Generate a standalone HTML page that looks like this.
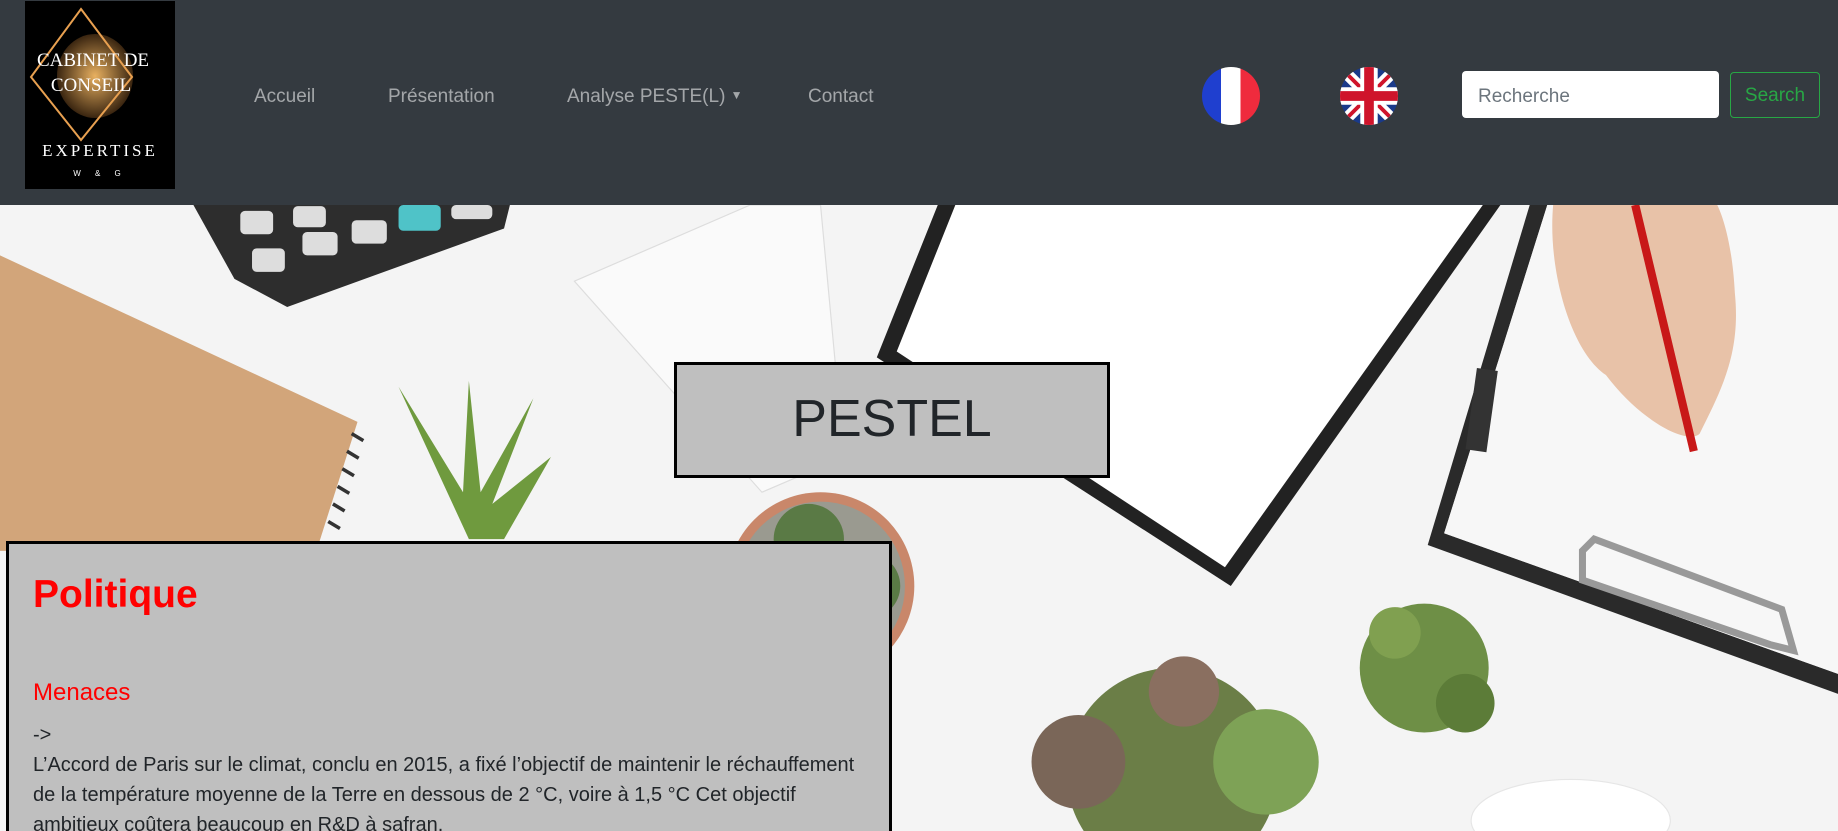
<!DOCTYPE html>
<html style="width:1838px;height:831px;overflow:hidden"><head><meta charset="utf-8"><style>
*{margin:0;padding:0;box-sizing:border-box}
body{width:1838px;height:831px;overflow:hidden;background:#f3f3f3;font-family:"Liberation Sans",sans-serif;position:relative}
nav{position:absolute;left:0;top:0;width:1838px;height:205px;background:#343a40}
.logo{position:absolute;left:25px;top:1px;width:150px;height:188px;background:#000;overflow:hidden}
.nl{position:absolute;top:86px;font-size:19px;color:rgba(255,255,255,.55)}
.flag{position:absolute;top:67px;width:58px;height:58px;border-radius:50%;overflow:hidden}
.search{position:absolute;left:1462px;top:71px;width:257px;height:47px;background:#fff;border-radius:4px;font-size:19px;color:#6c757d;padding:15px 16px 0}
.btn{position:absolute;left:1730px;top:72px;width:90px;height:46px;border:1px solid #28a745;border-radius:4px;color:#28a745;font-size:19px;text-align:center;line-height:46px}
.bg{position:absolute;left:0;top:205px}
.pestel{position:absolute;left:674px;top:362px;width:436px;height:116px;background:#bfbfbf;border:3px solid #000;text-align:center;font-size:52px;line-height:108px;color:#212529}
.card{position:absolute;left:6px;top:541px;width:886px;height:290px;background:#bfbfbf;border:3px solid #000;border-bottom:none;overflow:hidden}
h2{color:#f00;font-size:39px;font-weight:bold;position:absolute;left:24px;top:29px}
h3{color:#f00;font-size:24px;font-weight:normal;position:absolute;left:24px;top:135px}
.tx{position:absolute;left:24px;top:176px;width:840px;font-size:20px;line-height:30px;color:#212529;white-space:nowrap}
</style></head><body>
<svg class="bg" width="1838" height="626" viewBox="0 175 1568 534" preserveAspectRatio="none">
<rect x="0" y="175" width="1568" height="534" fill="#f4f4f4"/>
<polygon points="0,218 305,360 270,470 0,470" fill="#d2a57a"/>
<g stroke="#333" stroke-width="3" fill="none"><path d="M300,370 l10,6 M296,385 l10,6 M292,400 l10,6 M288,415 l10,6 M284,430 l10,6 M280,445 l10,6"/></g>
<polygon points="165,175 435,175 430,195 245,262 200,238" fill="#2d2d2d"/>
<g fill="#ddd"><rect x="205" y="180" width="28" height="20" rx="4"/><rect x="250" y="176" width="28" height="18" rx="4"/><rect x="215" y="212" width="28" height="20" rx="4"/><rect x="258" y="198" width="30" height="20" rx="4"/><rect x="300" y="188" width="30" height="20" rx="4"/><rect x="385" y="175" width="35" height="12" rx="4"/></g>
<rect x="340" y="175" width="36" height="22" rx="4" fill="#4fc3c8"/>
<polygon points="490,240 640,175 700,175 720,390 650,420" fill="#fafafa" stroke="#ddd"/>
<polygon points="800,175 1280,175 1050,500 748,305" fill="#222"/>
<polygon points="815,175 1265,175 1045,484 765,300" fill="#fff"/>
<polygon points="1305,175 1320,175 1232,455 1568,575 1568,592 1218,465" fill="#2a2a2a"/>
<polygon points="1320,175 1568,175 1568,575 1232,455" fill="#f7f7f7"/>
<rect x="1255" y="315" width="18" height="70" fill="#333" transform="rotate(8 1264 350)"/>
<path d="M1350,470 L1360,460 L1520,520 L1530,555 L1510,550 L1350,495 Z" fill="none" stroke="#999" stroke-width="6"/>
<path d="M1325,175 C1320,230 1340,300 1370,320 C1400,360 1440,380 1450,370 C1470,330 1485,300 1480,250 C1478,210 1470,185 1465,175 Z" fill="#e8c2a8"/>
<line x1="1395" y1="175" x2="1445" y2="385" stroke="#c81818" stroke-width="7"/>
<g fill="#6f9a3e"><path d="M400,460 L340,330 L395,420 L400,325 L410,420 L455,340 L420,430 L470,390 L430,460 Z"/></g>
<circle cx="700" cy="500" r="80" fill="#c9876a"/><circle cx="700" cy="500" r="72" fill="#9a9a90"/>
<g fill="#5a7a45"><circle cx="690" cy="460" r="30"/><circle cx="740" cy="500" r="28"/></g>
<g fill="#6e8f46"><circle cx="1215" cy="570" r="55"/><circle cx="1190" cy="540" r="22" fill="#80a050"/><circle cx="1250" cy="600" r="25" fill="#5c7c38"/></g>
<g fill="#6b7e47"><circle cx="1000" cy="660" r="90"/><circle cx="920" cy="650" r="40" fill="#7a6658"/><circle cx="1080" cy="650" r="45" fill="#7ea256"/><circle cx="1010" cy="590" r="30" fill="#8a6f60"/></g>
<ellipse cx="1340" cy="700" rx="85" ry="35" fill="#fff" stroke="#e6e6e6"/>
</svg>
<nav>
<div class="logo"><svg width="150" height="188"><defs><radialGradient id="g"><stop offset="0" stop-color="#e8b060"/><stop offset="1" stop-color="#3a2510"/></radialGradient></defs>
<ellipse cx="70" cy="75" rx="38" ry="42" fill="url(#g)"/>
<polygon points="56,8 107,76 56,139 6,76" fill="none" stroke="#e8a050" stroke-width="2"/>
<text x="68" y="65" fill="#fff" font-family="Liberation Serif" font-size="19" text-anchor="middle">CABINET DE</text>
<text x="66" y="90" fill="#fff" font-family="Liberation Serif" font-size="19" text-anchor="middle">CONSEIL</text>
<text x="75" y="155" fill="#fff" font-family="Liberation Serif" font-size="17" text-anchor="middle" letter-spacing="3">EXPERTISE</text>
<text x="75" y="175" fill="#fff" font-size="8" text-anchor="middle" letter-spacing="6">W &amp; G</text></svg></div>
<span class="nl" style="left:254px">Accueil</span>
<span class="nl" style="left:388px">Présentation</span>
<span class="nl" style="left:567px">Analyse PESTE(L) <span style="font-size:12px;vertical-align:3px">&#9660;</span></span>
<span class="nl" style="left:808px">Contact</span>
<div class="flag" style="left:1202px;background:linear-gradient(90deg,#1f3fcf 33%,#fff 33%,#fff 66%,#ef2b3d 66%)"></div>
<div class="flag" style="left:1340px"><svg width="58" height="58" viewBox="0 0 60 60"><rect width="60" height="60" fill="#1a3a8a"/><path d="M0,0L60,60M60,0L0,60" stroke="#fff" stroke-width="12"/><path d="M0,0L60,60M60,0L0,60" stroke="#cf142b" stroke-width="4"/><path d="M30,0V60M0,30H60" stroke="#fff" stroke-width="18"/><path d="M30,0V60M0,30H60" stroke="#cf142b" stroke-width="10"/></svg></div>
<div class="search">Recherche</div>
<div class="btn">Search</div>
</nav>
<div class="pestel">PESTEL</div>
<div class="card">
<h2>Politique</h2>
<h3>Menaces</h3>
<div class="tx">-&gt;<br>L’Accord de Paris sur le climat, conclu en 2015, a fixé l’objectif de maintenir le réchauffement<br>de la température moyenne de la Terre en dessous de 2 °C, voire à 1,5 °C Cet objectif<br>ambitieux coûtera beaucoup en R&amp;D à safran.</div>
</div>
</body></html>
